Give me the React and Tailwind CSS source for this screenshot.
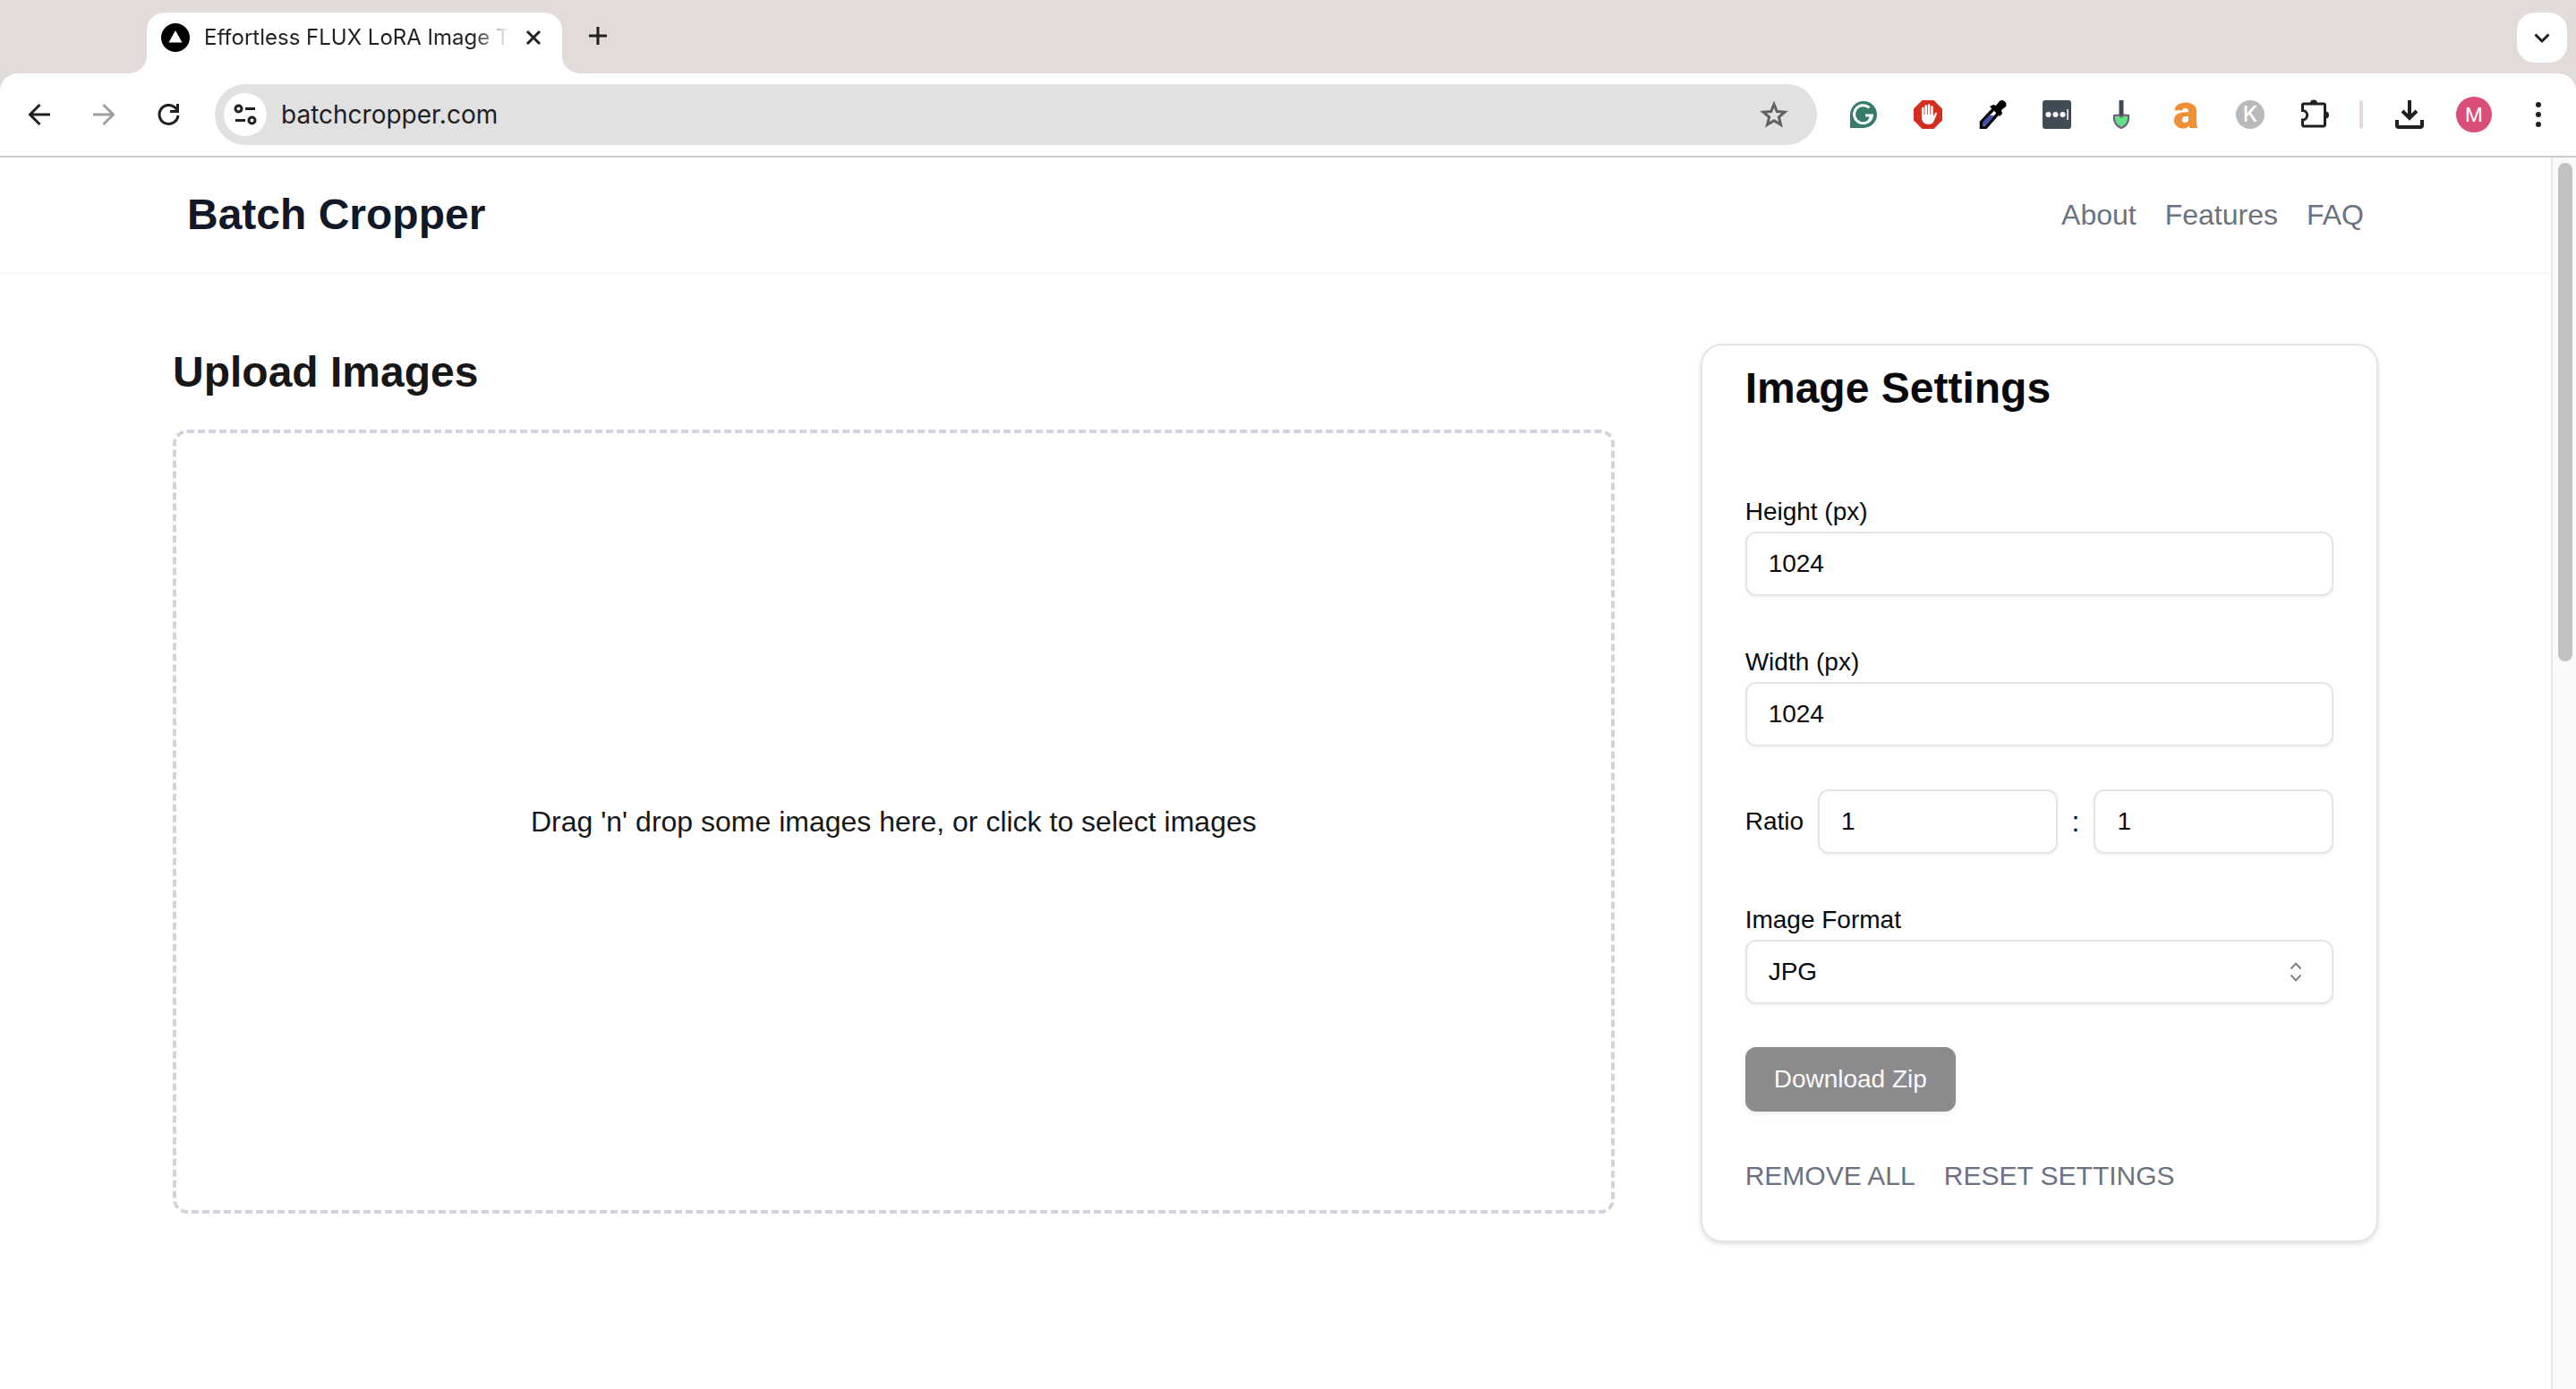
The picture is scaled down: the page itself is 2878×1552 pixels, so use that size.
'use client';

import { useState } from 'react';

const navLinks = ['About', 'Features', 'FAQ'];

function TabStrip() {
  return (
    <div className="flex h-[82px] justify-between bg-[#e3dbd8] pl-36 pr-[10px]">
      <div className="flex items-end">
        <svg width="20" height="20" viewBox="0 0 20 20" fill="#fff">
          <path d="M20 0v20H0C11 20 20 11 20 0z" />
        </svg>
        <div className="flex h-[68px] w-[464px] items-center rounded-t-[20px] bg-white pb-3 pl-4 pr-5">
          <svg width="32" height="32" viewBox="0 0 32 32">
            <circle cx="16" cy="16" r="16" fill="#000" />
            <path d="M16 8l7.500 13.500h-15z" fill="#fff" />
          </svg>
          <p className="ml-4 whitespace-nowrap text-2xl text-[#1f2023] [mask-image:linear-gradient(to_right,#000_88%,transparent)]">
            Effortless FLUX LoRA Image T
          </p>
          <button aria-label="Close tab" className="ml-auto">
            <svg width="24" height="24" viewBox="0 0 24 24" stroke="#1f2023" strokeWidth="3">
              <path d="M5 5l14 14M19 5L5 19" />
            </svg>
          </button>
        </div>
        <svg width="20" height="20" viewBox="0 0 20 20" fill="#fff">
          <path d="M0 0v20h20C9 20 0 11 0 0z" />
        </svg>
        <button aria-label="New tab" className="mb-[30px] ml-2">
          <svg width="24" height="24" viewBox="0 0 24 24" stroke="#1f2023" strokeWidth="3">
            <path d="M12 2v20M2 12h20" />
          </svg>
        </button>
      </div>
      <button aria-label="Search tabs" className="mt-[14px] flex size-14 items-center justify-center rounded-[20px] bg-white">
        <svg width="20" height="20" viewBox="0 0 20 20" fill="none" stroke="#1f2023" strokeWidth="3">
          <path d="M2.500 6.500l7.500 7.500 7.500-7.500" />
        </svg>
      </button>
    </div>
  );
}

function Toolbar() {
  return (
    <div className="bg-[#e3dbd8]">
      <div className="flex h-[94px] items-center rounded-t-[20px] border-b-2 border-[#cbcbcb] bg-white pl-7 pr-[26px]">
        <div className="flex gap-10">
          <button aria-label="Back">
            <svg width="32" height="32" viewBox="0 0 32 32" fill="none" stroke="#1f2023" strokeWidth="3">
              <path d="M28 16H6M16.500 5L5.500 16l11 11" />
            </svg>
          </button>
          <button aria-label="Forward">
            <svg width="32" height="32" viewBox="0 0 32 32" fill="none" stroke="#a0a0a0" strokeWidth="3">
              <path d="M4 16h22M15.500 5l11 11-11 11" />
            </svg>
          </button>
          <button aria-label="Reload">
            <svg width="32" height="32" viewBox="0 0 32 32" fill="none" stroke="#1f2023" strokeWidth="3">
              <path d="M27 17a10.500 10.500 0 1 1-3-8.500l2 2.500" />
              <path d="M26.500 4v8.500H18" />
            </svg>
          </button>
        </div>

        <div className="ml-9 flex h-[68px] flex-1 items-center rounded-full bg-[#e1e1e1] pl-[10px] pr-8">
          <button aria-label="Site information" className="flex size-12 items-center justify-center rounded-full bg-white">
            <svg width="28" height="28" viewBox="0 0 28 28" fill="none" stroke="#1f2023" strokeWidth="3">
              <circle cx="6.500" cy="7.500" r="3.500" />
              <path d="M14 7.500h11M3 20.500h11" />
              <circle cx="21.500" cy="20.500" r="3.500" />
            </svg>
          </button>
          <input
            type="text"
            aria-label="Address"
            defaultValue="batchcropper.com"
            className="ml-4 min-w-0 flex-1 bg-transparent text-[28px] text-[#1f2023] outline-none"
          />
          <button aria-label="Bookmark">
            <svg width="32" height="32" viewBox="0 0 32 32" fill="none" stroke="#5f6265" strokeWidth="3">
              <path d="M16 4.500l3.300 8 8.700.7-6.600 5.600 2.100 8.500-7.500-4.600-7.500 4.600 2.100-8.500L4 13.200l8.700-.7z" />
            </svg>
          </button>
        </div>

        <div className="ml-9 flex items-center gap-10">
          <svg width="32" height="32" viewBox="0 0 32 32">
            <path d="M1 31V16A15 15 0 1 1 16 31z" fill="#367c6b" />
            <path d="M22.500 8.500a10 10 0 1 0 3 8.500h-7.500M25.500 17l-3.500 6" fill="none" stroke="#fff" strokeWidth="3" />
          </svg>
          <svg width="32" height="32" viewBox="0 0 32 32">
            <path d="M9.500 0h13L32 9.500v13L22.500 32h-13L0 22.500v-13z" fill="#d32d20" />
            <g stroke="#fff" strokeWidth="2.600" strokeLinecap="round">
              <path d="M10.300 9v10M13.700 6.500V18M17.100 5.500V18M20.500 7.500V18" />
            </g>
            <path d="M9 16h12.800v2.500l2-4c.7-1.300 2.600-.8 2.200.8L23 22.500c-1.200 3.300-3.500 4.500-6.500 4.500C12 27 9 24 9 19.500z" fill="#fff" />
          </svg>
          <svg width="32" height="32" viewBox="0 0 32 32">
            <path d="M3.500 24.500L18 9l5 5L8.500 30.500h-5z" fill="#fff" stroke="#000" strokeWidth="3.500" />
            <path d="M5 25l7-8h6L8 28.500H5z" fill="#3f51b5" />
            <path d="M13 7l4-2 3 1 4-5c4-3 9 2 7 6l-5 4 1 4-3 3z" fill="#000" />
          </svg>
          <svg width="32" height="32" viewBox="0 0 32 32">
            <rect width="32" height="32" rx="3" fill="#404b55" />
            <circle cx="6.500" cy="16" r="3" fill="#fff" />
            <circle cx="14.500" cy="16" r="3" fill="#fff" />
            <circle cx="22.500" cy="16" r="3" fill="#fff" />
            <path d="M28 10v12" stroke="#fff" strokeWidth="1.500" />
          </svg>
          <svg width="32" height="32" viewBox="0 0 32 32">
            <path d="M16 0v18" stroke="#3d4a56" strokeWidth="5" />
            <path d="M8 17l5-.5 3 2 3-2 5 .5c1 6-2 12-8 14-6-2-9-8-8-14z" fill="#5ee083" stroke="#735a78" strokeWidth="2" />
          </svg>
          <span className="flex size-8 items-center justify-center pb-[6px] font-['Roboto',sans-serif] text-[54px] leading-8 font-black text-[#f18f34]">
            a
          </span>
          <span className="flex size-8 items-center justify-center rounded-full bg-[#b9b9b9] text-2xl font-medium text-white">K</span>
          <button aria-label="Extensions">
            <svg width="34" height="36" viewBox="0 0 34 36" fill="none" stroke="#1f2023" strokeWidth="3">
              <path d="M2.500 7.500a1.500 1.500 0 0 1 1.500-1.500h22a1.500 1.500 0 0 1 1.500 1.500v22a1.500 1.500 0 0 1-1.500 1.500H4a1.500 1.500 0 0 1-1.500-1.500V24a5.200 5.200 0 0 0 0-10.400z" />
              <path d="M11 5.500a4 4 0 0 1 8 0zM28 14.500a4 4 0 0 1 0 8z" fill="#1f2023" stroke="none" />
            </svg>
          </button>
        </div>
        <div className="ml-8 h-8 w-1 rounded-full bg-[#e3dbd8]" />
        <div className="ml-9 flex items-center gap-9">
          <button aria-label="Downloads">
            <svg width="32" height="32" viewBox="0 0 32 32" fill="none" stroke="#1f2023" strokeWidth="4">
              <path d="M16 0v20M8 12l8 8 8-8M2 22v6a2 2 0 0 0 2 2h24a2 2 0 0 0 2-2v-6" />
            </svg>
          </button>
          <button className="flex size-10 items-center justify-center rounded-full bg-[#da4f7a] text-[22px] text-white">M</button>
          <button aria-label="Menu">
            <svg width="32" height="32" viewBox="0 0 32 32" fill="#1f2023">
              <circle cx="16" cy="5" r="3" />
              <circle cx="16" cy="16" r="3" />
              <circle cx="16" cy="27" r="3" />
            </svg>
          </button>
        </div>
      </div>
    </div>
  );
}

function Header() {
  return (
    <header className="h-32 shadow-[0_2px_4px_rgba(0,0,0,0.05)]">
      <div className="mx-auto flex h-full max-w-[2560px] items-center justify-between px-16">
        <h1 className="text-5xl font-bold text-[#111827]">Batch Cropper</h1>
        <nav className="flex gap-8 text-[32px] leading-[48px] text-[#6b7280]">
          {navLinks.map((link) => (
            <a key={link} href={`#${link.toLowerCase()}`}>
              {link}
            </a>
          ))}
        </nav>
      </div>
    </header>
  );
}

function Field({ id, label, value, onChange }) {
  return (
    <input
      id={id}
      type="text"
      aria-label={label}
      value={value}
      onChange={onChange}
      className="h-[72px] w-full min-w-0 rounded-xl border-2 border-[#e4e4e7] px-6 text-[28px] shadow-[0_2px_4px_rgba(0,0,0,0.05)]"
    />
  );
}

function ImageSettings() {
  const [form, setForm] = useState({ height: '1024', width: '1024', ratioX: '1', ratioY: '1', format: 'JPG' });

  const handleChange = (e) => {
    setForm({ ...form, [e.target.id]: e.target.value });
  };

  return (
    <section className="rounded-3xl border-2 border-[#e4e4e7] text-zinc-950 shadow-[0_2px_6px_rgba(0,0,0,0.1),0_2px_4px_-2px_rgba(0,0,0,0.1)]">
      <div className="px-12 pt-4 pb-8">
        <h2 className="text-5xl/16 font-bold">Image Settings</h2>
      </div>
      <div className="flex flex-col gap-12 p-12">
        <div>
          <label htmlFor="height" className="block pt-1 text-[28px] leading-[44px]">
            Height (px)
          </label>
          <Field id="height" value={form.height} onChange={handleChange} />
        </div>
        <div>
          <label htmlFor="width" className="block pt-1 text-[28px] leading-[44px]">
            Width (px)
          </label>
          <Field id="width" value={form.width} onChange={handleChange} />
        </div>
        <div className="flex items-center gap-4">
          <label htmlFor="ratioX" className="text-[28px] leading-[44px]">
            Ratio
          </label>
          <Field id="ratioX" value={form.ratioX} onChange={handleChange} />
          <span className="text-[32px] leading-[48px]">:</span>
          <Field id="ratioY" label="Ratio height" value={form.ratioY} onChange={handleChange} />
        </div>
        <div>
          <label htmlFor="format" className="block pt-1 text-[28px] leading-[44px]">
            Image Format
          </label>
          <div className="relative">
            <select
              id="format"
              value={form.format}
              onChange={handleChange}
              className="h-[72px] w-full appearance-none rounded-xl border-2 border-[#e4e4e7] px-6 text-[28px] shadow-[0_2px_4px_rgba(0,0,0,0.05)]"
            >
              <option>JPG</option>
              <option>PNG</option>
              <option>WEBP</option>
            </select>
            <svg
              width="32"
              height="32"
              viewBox="0 0 32 32"
              fill="none"
              stroke="#848486"
              strokeWidth="2"
              className="pointer-events-none absolute right-[26px] top-5"
            >
              <path d="M10.500 12.500L16 6.500l5.500 6M10.500 19.500l5.500 6 5.500-6" />
            </svg>
          </div>
        </div>
        <button
          disabled
          className="h-[72px] self-start rounded-xl bg-[#8b8b8d] px-8 text-[28px] text-zinc-50 shadow-[0_2px_6px_rgba(0,0,0,0.08)]"
        >
          Download Zip
        </button>
        <div className="flex gap-8 text-3xl leading-[48px] text-[#6b7280]">
          <button>REMOVE ALL</button>
          <button>RESET SETTINGS</button>
        </div>
      </div>
    </section>
  );
}

export default function App() {
  return (
    <div className="flex min-h-screen flex-col bg-white font-['Inter',sans-serif]">
      <TabStrip />
      <Toolbar />
      <div className="flex flex-1 font-['Liberation_Sans',Arial,sans-serif]">
        <div className="min-w-0 flex-1">
          <Header />
          <main className="mx-auto grid max-w-[2560px] grid-cols-3 items-start gap-24 px-12 pt-20">
            <section className="col-span-2">
              <h2 className="mb-8 text-5xl/16 font-bold text-[#171717]">Upload Images</h2>
              <button className="flex h-[876px] w-full items-center justify-center rounded-2xl border-4 border-dashed border-[#d1d5db] text-[32px] text-[#171717]">
                Drag 'n' drop some images here, or click to select images
              </button>
            </section>
            <ImageSettings />
          </main>
        </div>
        {/* scrollbar */}
        <div className="w-7 border-l-2 border-[#e8e8e8] bg-[#fafafa] pl-[6px] pt-[6px]">
          <div className="h-[557px] w-4 rounded-full bg-[#c1c1c1]" />
        </div>
      </div>
    </div>
  );
}
